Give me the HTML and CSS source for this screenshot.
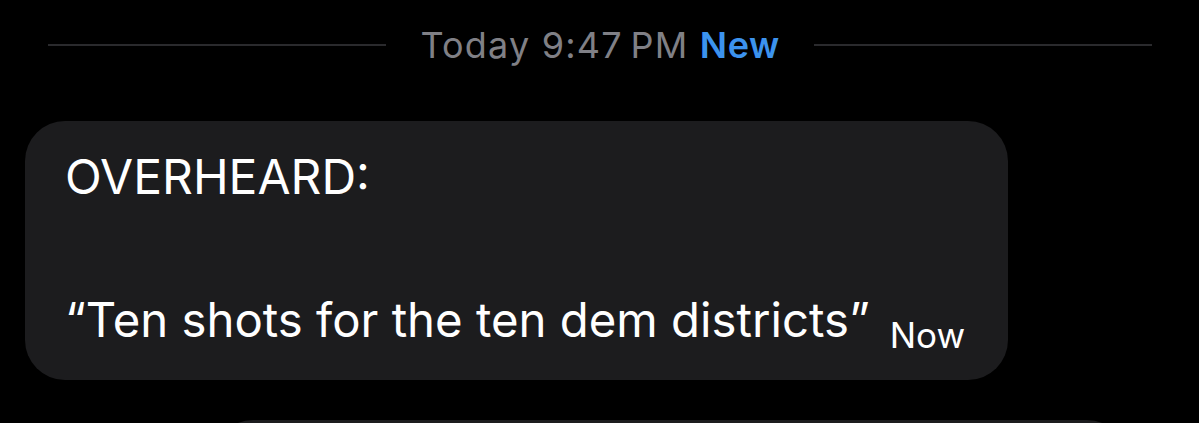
FILE: index.html
```html
<!DOCTYPE html>
<html lang="en">
<head>
<meta charset="utf-8">
<title>Message</title>
<link rel="stylesheet" href="styles.css">
</head>
<body>
<div class="screen">
  <div class="divider">
    <span class="rule"></span>
    <span class="stamp"><span class="when">Today 9:47&#8201;PM</span> <span class="new">New</span></span>
    <span class="rule"></span>
  </div>
  <div class="bubble">
    <p class="line">OVERHEARD:</p>
    <p class="line last">“Ten shots for the ten dem districts”<span class="time">Now</span></p>
  </div>
  <div class="bubble next"></div>
</div>
</body>
</html>
```

FILE: styles.css
```css
html, body {
  margin: 0;
  padding: 0;
  background: #000;
}
.screen {
  width: 1199px;
  height: 423px;
  overflow: hidden;
  background: #000;
  font-family: Inter, "Liberation Sans", sans-serif;
  color: #fff;
}
.divider {
  display: flex;
  align-items: center;
  gap: 34px;
  padding: 24px 47px 0 48px;
  height: 42px;
}
.rule {
  flex: 1;
  height: 2px;
  background: #2a2a2d;
}
.stamp {
  font-size: 36px;
  letter-spacing: 1.2px;
  line-height: 42px;
  white-space: nowrap;
}
.when {
  color: #808086;
}
.new {
  color: #3c93ee;
  font-weight: 600;
  letter-spacing: 0.5px;
}
.bubble {
  margin: 55px 0 0 25px;
  width: 983px;
  height: 259px;
  box-sizing: border-box;
  background: #1c1c1e;
  border-radius: 40px;
  padding: 28px 40px 0 40px;
}
.line {
  margin: 0;
  font-size: 48px;
  line-height: 56px;
  color: #fff;
}
.last {
  margin-top: 87px;
  font-size: 47.3px;
  white-space: nowrap;
}
.time {
  font-size: 35px;
  margin-left: 20px;
  vertical-align: -11px;
}
.bubble.next {
  margin: 40px 0 0 213px;
  width: 914px;
  height: 80px;
  padding: 0;
}
```
